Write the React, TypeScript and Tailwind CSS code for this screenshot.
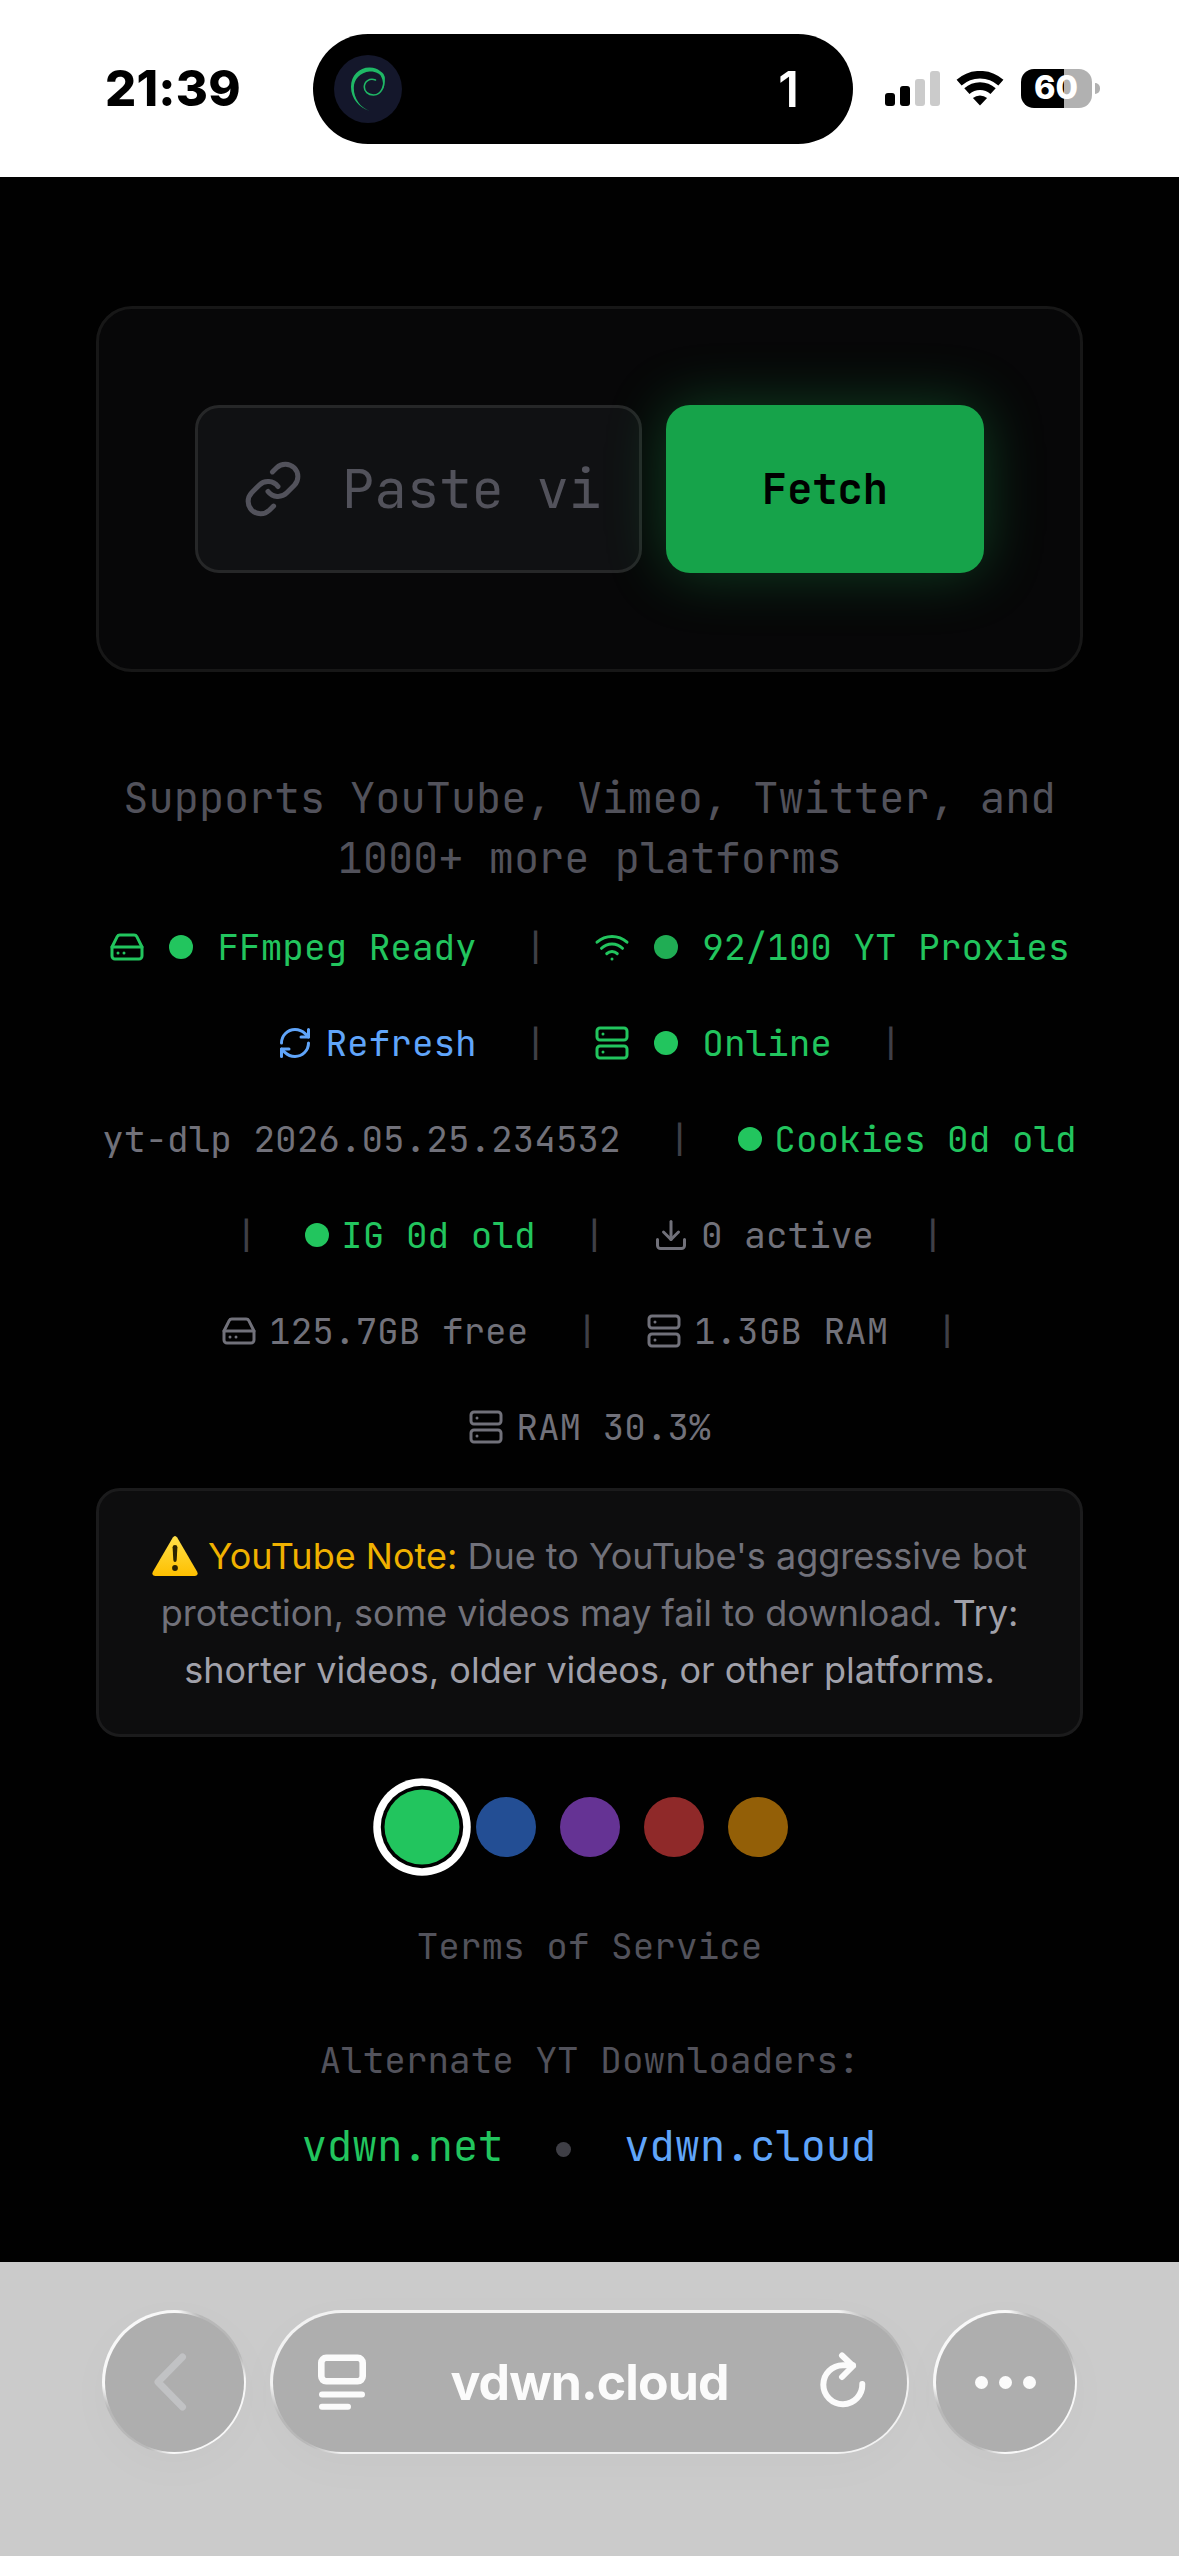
import React from 'react';
import { Download, HardDrive, Link, RefreshCw, Server, Wifi } from 'lucide-react';

const Separator = () => <span className="text-[#3f3f46]">|</span>;

const Dot = ({ className = 'bg-[#22c55e]' }: { className?: string }) => (
  <span className={`size-6 shrink-0 rounded-full ${className}`} />
);

const SwirlLogo = () => (
  <svg className="size-[68px]" viewBox="0 0 68 68" fill="none">
    <path
      d="M36 56C25 52.5 17 43.5 17 32C17 20.5 25 12.5 35.5 12.5C40.5 12.5 43.5 14 46 16C47.5 17 50.5 18.5 50.8 23L50.2 27L48.5 23C46 18.5 41.5 16.3 35.5 16.6C26.5 17.5 19.8 24 19.8 33C19.8 43.5 26.5 53 36 56Z"
      fill="#1fb866"
    />
    <path
      d="M49.3 21C51.5 29 48 40 39.5 40C34 40 30.3 36.5 30.3 32C30.3 26.5 35.5 22.8 41.5 25"
      stroke="#1fb866"
      strokeWidth="1.6"
      strokeLinecap="round"
    />
    <path d="M48 19C51.5 24 51 32 48 36C49.5 31 49.5 26 47 21Z" fill="#1fb866" />
  </svg>
);

const StatusBar = () => (
  <header className="flex h-[177px] shrink-0 items-start bg-white pl-[105px] pt-[34px]">
    <div className="flex h-[109px] w-[208px] items-center font-['Inter',sans-serif] text-[49px] font-extrabold leading-none tracking-[0.2px] text-black">
      21:39
    </div>
    <div className="flex h-[110px] w-[540px] items-center justify-between rounded-full bg-black pl-[21px] pr-[54px]">
      <div className="size-[68px] rounded-full bg-[#14172b]">
        <SwirlLogo />
      </div>
      <span className="pt-px font-['Inter',sans-serif] text-[49px] font-semibold leading-none text-white">1</span>
    </div>
    <div className="flex h-[108px] items-center pl-8">
      <div className="flex h-[35px] items-end gap-[5.5px]">
        <div className="h-[13px] w-[9.5px] rounded-[3px] bg-black" />
        <div className="h-5 w-[9.5px] rounded-[3px] bg-black" />
        <div className="h-[27px] w-[9.5px] rounded-[3px] bg-[#cbcbcb]" />
        <div className="h-[35px] w-[9.5px] rounded-[3px] bg-[#cbcbcb]" />
      </div>
      <svg className="ml-4 h-[35px] w-[48px]" viewBox="0 0 48 35" fill="none" stroke="#000">
        <path d="M3.1 11.7A31.3 31.3 0 0 1 44.9 11.7" strokeWidth="7.6" />
        <path d="M10.9 20.2A19.6 19.6 0 0 1 37.1 20.2" strokeWidth="7.8" />
        <path d="M24 34.6 16.9 27A11 11 0 0 1 31.1 27Z" fill="#000" stroke="none" />
      </svg>
      <div className="ml-[17px] flex h-[39px] w-[71px] items-center justify-center rounded-[13px] bg-[linear-gradient(90deg,#000_61%,#b1b1b1_61%)] font-['Inter',sans-serif] text-[32.5px] font-extrabold leading-none text-white">
        60
      </div>
      <div className="ml-[3px] h-[11px] w-[5px] rounded-r-full bg-[#b1b1b1]" />
    </div>
  </header>
);

const FetchForm = () => (
  <section className="flex gap-6 rounded-[36px] border-[3px] border-[#171717] bg-[#070708] p-24">
    <div className="flex h-[168px] w-[447px] items-center overflow-hidden rounded-[24px] border-[3px] border-[#262728] bg-[#101113] pl-[45px] text-[#52525b]">
      <Link className="size-[60px] shrink-0" />
      <span className="ml-[39px] text-[54px] leading-none whitespace-pre">Paste vi</span>
    </div>
    <button className="h-[168px] w-[318px] rounded-[24px] bg-[#16a34a] text-[42px] font-semibold text-black shadow-[0_0_60px_rgba(34,197,94,0.3)]">
      Fetch
    </button>
  </section>
);

const SystemStatus = () => (
  <section className="mt-[35px] flex flex-wrap justify-center gap-12 text-[36px] leading-[48px] text-[#71717a] [&_svg]:size-9 [&_svg]:shrink-0">
    <div className="flex items-center gap-6 text-[#22c55e]">
      <HardDrive />
      <Dot />
      <span>FFmpeg Ready</span>
    </div>
    <Separator />
    <div className="flex items-center gap-6 text-[#22c55e]">
      <Wifi />
      <Dot className="bg-[#20ad54]" />
      <span>92/100 YT Proxies</span>
    </div>
    <div className="flex items-center gap-3 text-[#60a5fa]">
      <RefreshCw />
      <span>Refresh</span>
    </div>
    <Separator />
    <div className="flex items-center gap-6 text-[#22c55e]">
      <Server />
      <Dot />
      <span>Online</span>
    </div>
    <Separator />
    <span>yt-dlp 2026.05.25.234532</span>
    <Separator />
    <div className="flex items-center gap-3 text-[#22c55e]">
      <Dot />
      <span>Cookies 0d old</span>
    </div>
    <Separator />
    <div className="flex items-center gap-3 text-[#22c55e]">
      <Dot />
      <span>IG 0d old</span>
    </div>
    <Separator />
    <div className="flex items-center gap-3">
      <Download />
      <span>0 active</span>
    </div>
    <Separator />
    <div className="flex items-center gap-3">
      <HardDrive />
      <span>125.7GB free</span>
    </div>
    <Separator />
    <div className="flex items-center gap-3">
      <Server />
      <span>1.3GB RAM</span>
    </div>
    <Separator />
    <div className="flex items-center gap-3">
      <Server />
      <span>RAM 30.3%</span>
    </div>
  </section>
);

const WarningIcon = () => (
  <svg className="inline-block h-[40px] w-[46px] align-[-7px]" viewBox="0 0 46 40">
    <defs>
      <linearGradient id="warning" x1="0" y1="0" x2="0" y2="1">
        <stop offset="0" stopColor="#ffe04a" />
        <stop offset="1" stopColor="#fdbf00" />
      </linearGradient>
    </defs>
    <path d="M20.8 1.6Q23-1.4 25.2 1.6L45 35.6Q47 39.6 43 40H3Q-1 39.6 1 35.6Z" fill="url(#warning)" />
    <path d="M20.6 11.2Q20.6 9 23 9T25.4 11.2L24.7 24Q24.5 26 23 26T21.3 24Z" fill="#2b2300" />
    <circle cx="23" cy="32" r="2.9" fill="#2b2300" />
  </svg>
);

const YouTubeNote = () => (
  <section className="mt-[37px] rounded-[24px] border-[3px] border-[#1b1b1c] bg-[#0d0d0e] px-9 pb-[35px] pt-[37px] text-center font-['Inter',sans-serif] text-[36px] leading-[57px] text-[#71717a]">
    <p className="whitespace-nowrap">
      <WarningIcon /> <span className="text-[#f0b100]">YouTube Note:</span> Due to YouTube's aggressive bot
      <br />
      protection, some videos may fail to download. <span className="text-[#a1a1aa]">Try:</span>
      <br />
      <span className="text-[#a1a1aa]">shorter videos, older videos, or other platforms.</span>
    </p>
  </section>
);

const ThemePicker = () => (
  <div className="mt-[60px] flex justify-center gap-6">
    <div className="size-[60px] scale-125 rounded-full bg-[#22c55e] shadow-[0_0_0_3px_#000,0_0_0_9px_#fff]" />
    <div className="size-[60px] rounded-full bg-[#3b82f6] opacity-60" />
    <div className="size-[60px] rounded-full bg-[#a855f7] opacity-60" />
    <div className="size-[60px] rounded-full bg-[#ef4444] opacity-60" />
    <div className="size-[60px] rounded-full bg-[#f59e0b] opacity-60" />
  </div>
);

const BrowserBar = () => (
  <footer className="flex h-[294px] shrink-0 items-start gap-6 bg-[#cbcbcb] pl-[102px] pt-12 font-['Inter',sans-serif] text-[#fbfbfb]">
    <div className="size-36 rounded-full bg-[linear-gradient(45deg,#b8b8b8_18%,#f8f8f8_24%,#f8f8f8_76%,#b8b8b8_82%)] p-[2.5px] shadow-[0_12px_50px_rgba(0,0,0,0.025)]">
      <div className="flex size-full items-center justify-center rounded-full bg-[#aeaeae]">
        <svg className="mr-[9px] h-[58px] w-[34px]" viewBox="0 0 34 58" fill="none" stroke="#c1c2c4" strokeWidth="7" strokeLinecap="round" strokeLinejoin="round">
          <path d="M29.5 4 5 29l24.5 25" />
        </svg>
      </div>
    </div>
    <div className="h-36 w-[639px] rounded-full bg-[linear-gradient(45deg,#b8b8b8_6%,#f2f2f2_9%,#f2f2f2_91%,#b8b8b8_94%)] p-[2.5px] shadow-[0_12px_50px_rgba(0,0,0,0.025)]">
      <div className="flex size-full items-center justify-between rounded-full bg-[#aeaeae] pl-[45px] pr-[41px]">
        <svg className="h-[56px] w-[48px]" viewBox="0 0 48 56" fill="none" stroke="currentColor" strokeLinecap="round">
          <rect x="3.3" y="3.8" width="41.4" height="23.5" rx="5" strokeWidth="6.6" />
          <path d="M4 40.5h40M4 52.8h26" strokeWidth="6" />
        </svg>
        <span className="mr-1.5 text-[50px] font-bold leading-none tracking-[-0.9px]">vdwn.cloud</span>
        <svg className="mb-1 h-[56px] w-[46px]" viewBox="0 0 46 56" fill="none" stroke="currentColor" strokeWidth="6" strokeLinecap="round" strokeLinejoin="round">
          <path d="M42.3 32A19.5 19.5 0 1 1 23 13.2h10" />
          <path d="M22 3.5 33 14 22 25" />
        </svg>
      </div>
    </div>
    <div className="size-36 rounded-full bg-[linear-gradient(45deg,#b8b8b8_18%,#f8f8f8_24%,#f8f8f8_76%,#b8b8b8_82%)] p-[2.5px] shadow-[0_12px_50px_rgba(0,0,0,0.025)]">
      <div className="flex size-full items-center justify-center gap-[11px] rounded-full bg-[#aeaeae]">
        <span className="size-[13px] rounded-full bg-[#fbfbfb]" />
        <span className="size-[13px] rounded-full bg-[#fbfbfb]" />
        <span className="size-[13px] rounded-full bg-[#fbfbfb]" />
      </div>
    </div>
  </footer>
);

const App: React.FC = () => {
  return (
    <div className="flex h-[2556px] w-[1179px] flex-col overflow-hidden bg-[#010101] font-['JetBrains_Mono','DejaVu_Sans_Mono',monospace]">
      <StatusBar />
      <main className="flex-1 px-24 pt-[129px]">
        <FetchForm />
        <p className="mt-24 text-center text-[42px] leading-[60px] text-[#52525b]">
          Supports YouTube, Vimeo, Twitter, and 1000+ more platforms
        </p>
        <SystemStatus />
        <YouTubeNote />
        <ThemePicker />
        <p className="mt-[65px] text-center text-[36px] leading-[48px] text-[#52525b]">Terms of Service</p>
        <p className="mt-[66px] text-center text-[36px] leading-[48px] text-[#52525b]">Alternate YT Downloaders:</p>
        <div className="mt-8 flex items-center justify-center pr-px text-[42px] leading-[60px]">
          <a className="text-[#22c55e]">vdwn.net</a>
          <span className="mx-[53px] mt-1.5 size-[15px] rounded-full bg-[#3f3f46]" />
          <a className="text-[#60a5fa]">vdwn.cloud</a>
        </div>
      </main>
      <BrowserBar />
    </div>
  );
};

export default App;
